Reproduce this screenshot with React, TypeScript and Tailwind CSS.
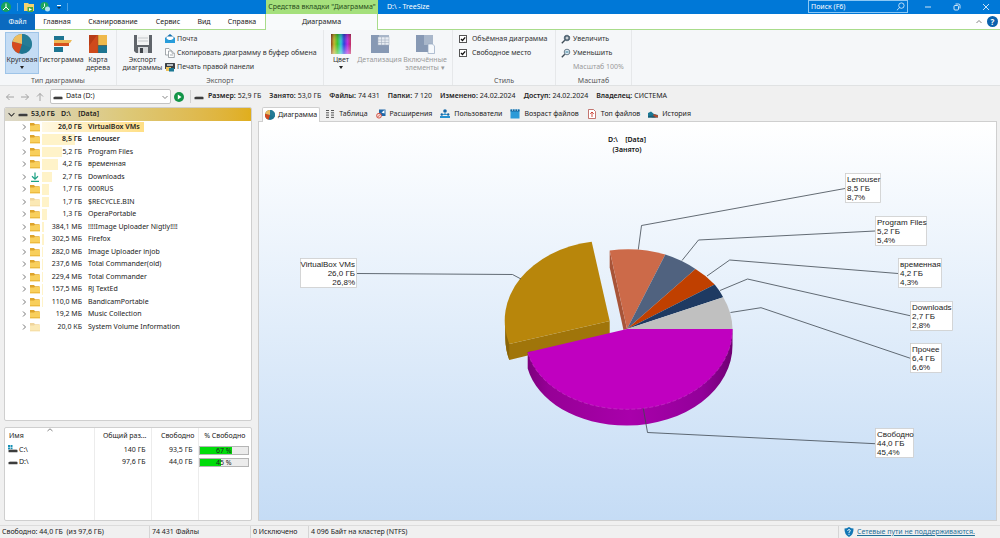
import { ReactNode, useState } from "react";

/* ---------- icons ---------- */

function PieIcon({ className = "size-5" }: { className?: string }) {
  return (
    <svg viewBox="0 0 20 20" className={className} aria-hidden="true">
      <circle cx="10" cy="10" r="10" fill="#1d7591" />
      <path d="M10 10 L10 0 A10 10 0 0 1 19 14 Z" fill="#257c96" />
      <path d="M10 10 L0.3 7.5 A10 10 0 0 0 7 19.5 Z" fill="#d64a1e" />
      <path d="M10 10 L10 0 A10 10 0 0 0 0.3 7.5 Z" fill="#eebd5f" />
    </svg>
  );
}

function HistogramIcon() {
  return (
    <svg viewBox="0 0 20 20" className="size-5" aria-hidden="true">
      <rect x="2" y="2" width="10" height="5" fill="#1d7591" />
      <rect x="2" y="13" width="9" height="5" fill="#1d7591" />
      <rect x="2" y="9" width="15" height="3" fill="#d6521e" />
      <path d="M2 6 H20 L18 9 H2 Z" fill="#edb956" />
    </svg>
  );
}

function TreemapIcon() {
  return (
    <svg viewBox="0 0 20 20" className="size-5" aria-hidden="true">
      <rect x="1" y="1" width="9" height="18" fill="#cf4a1c" />
      <path d="M1 1 H9 L1 12 Z" fill="#b73c17" />
      <rect x="10" y="1" width="9" height="11" fill="#efb94b" />
      <rect x="10" y="11" width="9" height="8" fill="#1d7591" />
      <path d="M10 1 V19 M10 11.500 H19" stroke="#8a5a2a" strokeWidth=".5" />
    </svg>
  );
}

function FloppyIcon() {
  return (
    <svg viewBox="0 0 20 20" className="size-5" aria-hidden="true">
      <path d="M1 1 H19 V19 H3 L1 17 Z" fill="#60656b" />
      <rect x="4" y="1" width="12" height="10" fill="#f2f3f4" />
      <path d="M5 4 H15 M5 7 H15" stroke="#c3c7ca" />
      <rect x="5" y="13" width="10" height="6" fill="#d6d9dc" />
      <rect x="7" y="14" width="3" height="5" fill="#3f444a" />
    </svg>
  );
}

function MailIcon() {
  return (
    <svg viewBox="0 0 10 10" className="size-[10px]" aria-hidden="true">
      <path d="M0 4 L5 0 L10 4 V9 H0 Z" fill="#1471ad" />
      <path d="M1.500 2.500 H8.500 V6 H1.500 Z" fill="#fff" />
      <path d="M0 4 L5 6.500 L10 4 V9 H0 Z" fill="#289ddb" />
    </svg>
  );
}

function CopyIcon() {
  return (
    <svg viewBox="0 0 10 10" className="size-[10px]" fill="#fff" stroke="#7f878d" strokeWidth=".7" aria-hidden="true">
      <path d="M.5 .5 H4 L6 2.500 V7 H.5 Z" />
      <path d="M3.500 3 H7 L9.300 5.200 V9.500 H3.500 Z" />
      <path d="M7 3 V5.200 H9.300 M5 7 H8" />
    </svg>
  );
}

function PrintIcon() {
  return (
    <svg viewBox="0 0 10 10" className="size-[10px]" aria-hidden="true">
      <rect x="0" y="1" width="10" height="6" rx=".5" fill="#3b4045" />
      <rect x="2" y="2" width="6" height="2" fill="#b8bec3" />
      <rect x="1" y="5" width="5" height="4" fill="#efc258" />
      <rect x="4" y="6" width="5" height="3.500" fill="#1b7894" />
    </svg>
  );
}

function ColorIcon() {
  return (
    <svg viewBox="0 0 20 20" className="size-5" aria-hidden="true">
      <defs>
        <linearGradient id="hue">
          <stop offset="0" stopColor="#8a3a1c" />
          <stop offset=".15" stopColor="#c4b52a" />
          <stop offset=".32" stopColor="#3cc32b" />
          <stop offset=".5" stopColor="#2cc6d6" />
          <stop offset=".65" stopColor="#2b3fdc" />
          <stop offset=".82" stopColor="#b92be0" />
          <stop offset="1" stopColor="#c22a58" />
        </linearGradient>
        <linearGradient id="shade" x2="0" y2="1">
          <stop offset="0" stopColor="#000" stopOpacity=".25" />
          <stop offset=".5" stopColor="#fff" stopOpacity="0" />
          <stop offset="1" stopColor="#fff" stopOpacity=".4" />
        </linearGradient>
      </defs>
      <rect width="20" height="20" fill="url(#hue)" />
      <rect width="20" height="20" fill="url(#shade)" />
    </svg>
  );
}

function DetailIcon() {
  return (
    <svg viewBox="0 0 20 20" className="size-5" aria-hidden="true">
      <rect x="1" y="1" width="18" height="18" fill="#a9b7ca" />
      <path d="M1 1 H9 V11 H19 V19 H1 Z" fill="#8799b4" />
      <rect x="8" y="3" width="11" height="8" fill="#e8edf3" stroke="#a2aebf" strokeWidth=".5" />
      <path d="M8 6 H19 M8 8.500 H19 M11.500 3 V11 M15 3 V11" stroke="#a2aebf" strokeWidth=".6" />
    </svg>
  );
}

function IncludedIcon() {
  return (
    <svg viewBox="0 0 20 20" className="size-5" aria-hidden="true">
      <rect x="1" y="1" width="17" height="17" fill="#a9b7ca" />
      <path d="M1 1 H9 V11 H18 V18 H1 Z" fill="#8799b4" />
      <path d="M13 10 H17.500 L19.500 12 V19.500 H13 Z" fill="#f6f9fc" stroke="#93a6c0" strokeWidth=".7" />
    </svg>
  );
}

function ZoomIcon({ plus }: { plus?: boolean }) {
  return (
    <svg viewBox="0 0 10 10" className="size-[10px]" fill="none" aria-hidden="true">
      <path d="M.8 9.200 L3.800 6.200" stroke="#3c4a55" strokeWidth="1.300" />
      <circle cx="6" cy="4" r="2.800" fill={plus ? "#4c6170" : "#dce9f2"} stroke="#4c6170" strokeWidth=".8" />
      <path d="M4.500 4 H7.500" stroke={plus ? "#fff" : "#1d7591"} strokeWidth=".9" />
      {plus && <path d="M6 2.500 V5.500 M8.500 0 V2 M7.500 1 H9.500" stroke="#fff" strokeWidth=".9" />}
    </svg>
  );
}

function FolderIcon({ faded }: { faded?: boolean }) {
  return (
    <svg viewBox="0 0 10 10" className={faded ? "size-[10px] shrink-0 opacity-45" : "size-[10px] shrink-0"} aria-hidden="true">
      <path d="M0 1 H4 L5 2.200 H9.500 V5 H0 Z" fill="#dda32b" />
      <path d="M0 3.500 H4 L5 2.800 H10 V9.200 H0 Z" fill="#f8cf5c" />
      <path d="M0 8 H10 V9.200 H0 Z" fill="#edba3f" />
    </svg>
  );
}

function DownloadIcon() {
  return (
    <svg viewBox="0 0 10 10" className="size-[10px] shrink-0" fill="none" stroke="#1ba184" aria-hidden="true">
      <path d="M5 .5 V7 M2 4.300 L5 7.200 L8 4.300 M1 9.300 H9" strokeWidth="1.200" />
    </svg>
  );
}

function DriveIcon({ system }: { system?: boolean }) {
  return (
    <svg viewBox="0 0 10 10" className="size-[10px] shrink-0" aria-hidden="true">
      {system && <path d="M0 0 H2 V2 H0 Z M2.500 0 H4.500 V2 H2.500 Z M0 2.500 H2 V4.500 H0 Z M2.500 2.500 H4.500 V4.500 H2.500 Z" fill="#1790b5" />}
      <path d="M1 5 L2 4.300 H8.500 L9.500 5 Z" fill="#a5a5a5" />
      <rect x=".5" y="5" width="9" height="2.200" rx=".5" fill="#3d3d3d" />
    </svg>
  );
}

function Chevron({ className = "size-[6px]", d = "M2 0.5 L4.500 3 L2 5.500" }: { className?: string; d?: string }) {
  return (
    <svg viewBox="0 0 6 6" className={className} fill="none" stroke="currentColor" strokeWidth=".9" aria-hidden="true">
      <path d={d} />
    </svg>
  );
}

function Arrow({ d }: { d: string }) {
  return (
    <svg viewBox="0 0 10 10" className="size-[10px]" fill="none" stroke="#9a9a9a" strokeWidth=".9" aria-hidden="true">
      <path d={d} />
    </svg>
  );
}

const tabIcons: Record<string, ReactNode> = {
  table: (
    <svg viewBox="0 0 10 10" className="size-[10px]" stroke="#555" strokeWidth="1" aria-hidden="true">
      <path d="M1 1.500 H4 M6 1.500 H9 M1 3.800 H4 M6 3.800 H9 M1 6.100 H4 M6 6.100 H9 M1 8.400 H4 M6 8.400 H9" />
    </svg>
  ),
  ext: (
    <svg viewBox="0 0 10 10" className="size-[10px]" aria-hidden="true">
      <path d="M3 .5 H9.500 V7 H3 Z" fill="#1f66a8" />
      <path d="M5.500 3.500 L8.500 1 V4.500 Z" fill="#fff" />
      <circle cx="3" cy="6.700" r="2.400" fill="#f7dcd8" stroke="#cf4a3c" strokeWidth=".9" />
      <path d="M1.500 8.200 L4.500 5.200" stroke="#cf4a3c" strokeWidth=".8" />
    </svg>
  ),
  users: (
    <svg viewBox="0 0 10 10" className="size-[10px]" aria-hidden="true">
      <circle cx="5" cy="2" r="1.800" fill="#1768a6" />
      <path d="M2.500 6 Q5 2.500 7.500 6 Z" fill="#2690cf" />
      <circle cx="1.800" cy="5.500" r="1.200" fill="#1768a6" />
      <circle cx="8.200" cy="5.500" r="1.200" fill="#1768a6" />
      <path d="M0 7 H10 V9 H0 Z" fill="#2690cf" />
    </svg>
  ),
  age: (
    <svg viewBox="0 0 10 10" className="size-[10px]" aria-hidden="true">
      <rect x=".5" y=".5" width="9" height="9" fill="#2b9ad8" />
      <rect x=".5" y=".5" width="9" height="2" fill="#15649b" />
      <path d="M2.500 0 V2 M5 0 V2 M7.500 0 V2" stroke="#d9eefa" strokeWidth=".6" />
    </svg>
  ),
  top: (
    <svg viewBox="0 0 10 10" className="size-[10px]" fill="none" aria-hidden="true">
      <path d="M1.500 .5 H6.500 L8.500 2.500 V9.500 H1.500 Z" fill="#fff" stroke="#b5544c" strokeWidth=".8" />
      <path d="M5 8 V3 M3.200 4.800 L5 3 L6.800 4.800" stroke="#cb3a2c" strokeWidth=".9" />
    </svg>
  ),
  history: (
    <svg viewBox="0 0 10 10" className="size-[10px]" aria-hidden="true">
      <path d="M0 8.500 V4 L3 2.500 L6 5 L10 6 V8.500 Z" fill="#1c7894" />
      <path d="M3.500 8.500 L6 5 L10 6.500 V8.500 Z" fill="#b14b2e" />
      <path d="M0 7 L5 6.500 L8 8.500 H0 Z" fill="#175f78" />
    </svg>
  ),
};

/* ---------- title bar and ribbon ---------- */

function TitleBar() {
  return (
    <header className="flex h-[14px] shrink-0 items-stretch bg-[#0078d7] text-white">
      <div className="flex w-[266px] items-center gap-[6px] pl-px">
        <svg viewBox="0 0 10 10" className="size-[10px]" aria-hidden="true">
          <circle cx="5" cy="5" r="5" fill="#17a35b" />
          <path d="M5 1.500 V5 M5 5 L2 8 M5 5 L8 8" stroke="#fff" strokeWidth="1" />
        </svg>
        <span className="h-2 w-px bg-[#4ba0e3]" />
        <button aria-label="Открыть">
          <svg viewBox="0 0 10 10" className="size-[10px]" aria-hidden="true">
            <path d="M0 1 H4 L5 2 H10 V9 H0 Z" fill="#f5d36d" />
            <path d="M3.500 5 H9 V10 H3.500 Z" fill="#4aa83f" />
            <path d="M5 6 L8 7.500 L5 9 Z" fill="#fff" />
          </svg>
        </button>
        <button aria-label="Обновить">
          <svg viewBox="0 0 10 10" className="size-[10px]" aria-hidden="true">
            <circle cx="4.500" cy="4" r="4" fill="#1ca65d" />
            <path d="M4.500 1.500 V4.500 L2.500 6.500" stroke="#fff" strokeWidth=".9" fill="none" />
            <circle cx="7.500" cy="7" r="2.500" fill="#aee1f2" />
          </svg>
        </button>
        <button aria-label="Настройка панели">
          <svg viewBox="0 0 6 6" className="size-[6px]" aria-hidden="true">
            <path d="M1 1.500 H5" stroke="#fff" />
            <path d="M1 3 H5 L3 5 Z" fill="#102a40" />
          </svg>
        </button>
        <span className="-ml-px h-2 w-px bg-[#4ba0e3]" />
      </div>
      <div className="flex w-[112px] items-center justify-center bg-[#a5e07c] text-[7px] whitespace-nowrap text-[#254a1a]">
        Средства вкладки "Диаграмма"
      </div>
      <h1 className="flex flex-1 items-center pl-[9px] text-[7px]">D:\ - TreeSize</h1>
      <label className="mb-px flex w-[100px] items-center border border-[#8cc8f5] pr-[2px]">
        <input
          aria-label="Поиск"
          placeholder="Поиск (F6)"
          className="min-w-0 flex-1 bg-transparent pl-[2px] text-[7px] leading-[9px] outline-none placeholder:text-white"
        />
        <svg viewBox="0 0 10 10" className="size-[9px]" fill="none" stroke="#fff" strokeWidth=".8" aria-hidden="true">
          <circle cx="6" cy="4" r="3" />
          <path d="M4 6.200 L1 9.200" />
        </svg>
      </label>
      <div className="flex w-[92px] items-center justify-around pl-[5px]">
        <button aria-label="Свернуть">
          <svg viewBox="0 0 8 8" className="size-2" stroke="#fff" strokeWidth=".8">
            <path d="M1 4 H7" />
          </svg>
        </button>
        <button aria-label="Восстановить">
          <svg viewBox="0 0 8 8" className="size-2" fill="none" stroke="#fff" strokeWidth=".8">
            <rect x="1" y="2.500" width="4.500" height="4.500" rx="1" />
            <path d="M2.500 1 H5.500 Q7 1 7 2.500 V5.500" />
          </svg>
        </button>
        <button aria-label="Закрыть">
          <svg viewBox="0 0 8 8" className="size-2" stroke="#fff" strokeWidth=".8">
            <path d="M1 1 L7 7 M7 1 L1 7" />
          </svg>
        </button>
      </div>
    </header>
  );
}

function RibbonTabs() {
  const tab = "flex items-center justify-center pt-px text-[7px]";
  return (
    <nav className="flex h-4 shrink-0 bg-white">
      <button className="w-[35px] bg-[#0b6abf] text-[7px] text-white">Файл</button>
      <div className="flex w-[231px] border-r border-b border-[#a9dc8b]">
        <button className={`${tab} w-[44px]`}>Главная</button>
        <button className={`${tab} w-[68px]`}>Сканирование</button>
        <button className={`${tab} w-[42px]`}>Сервис</button>
        <button className={`${tab} w-[30px]`}>Вид</button>
        <button className={`${tab} w-[46px]`}>Справка</button>
      </div>
      <button className={`${tab} w-[112px] border-r border-[#a9dc8b] bg-[#f8fafb]`}>Диаграмма</button>
      <div className="flex flex-1 items-center justify-end gap-[5px] border-b border-[#a9dc8b] pr-[2px]">
        <button aria-label="Свернуть ленту" className="text-[#777]">
          <Chevron d="M.5 4 L3 1.500 L5.500 4" />
        </button>
        <button aria-label="Помощь" className="grid size-[11px] place-items-center rounded-full bg-[#0b62ad] text-[8px] leading-none font-bold text-white">
          ?
        </button>
      </div>
    </nav>
  );
}

function Group({ title, className, children }: { title: string; className: string; children: ReactNode }) {
  return (
    <section className={`flex flex-col justify-between border-r border-[#e6e8ea] pt-[2px] ${className}`}>
      <div className="flex">{children}</div>
      <h2 className="text-center text-[7px] leading-[9px] text-[#555]">{title}</h2>
    </section>
  );
}

function BigButton({ icon, lines, arrow, className, disabled }: { icon: ReactNode; lines: string[]; arrow?: boolean; className: string; disabled?: boolean }) {
  return (
    <button
      disabled={disabled}
      className={`flex h-[42px] flex-col items-center border pt-px text-[7px] leading-[8px] whitespace-nowrap disabled:text-[#9a9a9a] ${className}`}
    >
      <span className="mb-[2px]">{icon}</span>
      {lines.map((l) => (
        <span key={l}>{l}</span>
      ))}
      {arrow && (
        <svg viewBox="0 0 4 3" className="mt-[2px] h-[3px] w-1" aria-hidden="true">
          <path d="M0 0 H4 L2 3 Z" fill="#222" />
        </svg>
      )}
    </button>
  );
}

function SmallButton({ icon, label }: { icon: ReactNode; label: string }) {
  return (
    <button className="flex h-[14px] items-center gap-[2px] whitespace-nowrap">
      {icon}
      {label}
    </button>
  );
}

function Check({ label }: { label: string }) {
  return (
    <label className="flex h-[14px] items-center gap-[5px] whitespace-nowrap">
      <span className="grid size-2">
        <input type="checkbox" defaultChecked className="peer col-start-1 row-start-1 size-2 appearance-none border border-[#555] bg-white" />
        <svg viewBox="0 0 8 8" className="pointer-events-none col-start-1 row-start-1 hidden size-2 peer-checked:block" fill="none" stroke="#111" strokeWidth="1.300" aria-hidden="true">
          <path d="M2 4 L3.500 5.500 L6.200 2.300" />
        </svg>
      </span>
      {label}
    </label>
  );
}

function Ribbon() {
  return (
    <div className="flex h-[56px] shrink-0 border-b border-[#e0e2e3] bg-[#f5f7f9] text-[7px] text-[#333]">
      <Group title="Тип диаграммы" className="w-[117px]">
        <BigButton icon={<PieIcon />} lines={["Круговая"]} arrow className="ml-[5px] w-[34px] border-[#9ec4e8] bg-[#c4dcf4]" />
        <BigButton icon={<HistogramIcon />} lines={["Гистограмма"]} className="w-[45px] border-transparent" />
        <BigButton icon={<TreemapIcon />} lines={["Карта", "дерева"]} className="w-[28px] border-transparent" />
      </Group>
      <Group title="Экспорт" className="w-[207px]">
        <BigButton icon={<FloppyIcon />} lines={["Экспорт", "диаграммы"]} className="ml-[5px] w-[41px] border-transparent" />
        <div className="ml-[2px] flex flex-col">
          <SmallButton icon={<MailIcon />} label="Почта" />
          <SmallButton icon={<CopyIcon />} label="Скопировать диаграмму в буфер обмена" />
          <SmallButton icon={<PrintIcon />} label="Печать правой панели" />
        </div>
      </Group>
      <Group title="" className="w-[129px]">
        <BigButton icon={<ColorIcon />} lines={["Цвет"]} arrow className="w-[34px] border-transparent" />
        <BigButton icon={<DetailIcon />} lines={["Детализация"]} className="w-[43px] border-transparent" disabled />
        <BigButton icon={<IncludedIcon />} lines={["Включённые", "элементы ▾"]} className="w-[48px] border-transparent" disabled />
      </Group>
      <Group title="Стиль" className="w-[103px]">
        <div className="flex flex-col pl-[6px]">
          <Check label="Объёмная диаграмма" />
          <Check label="Свободное место" />
        </div>
      </Group>
      <Group title="Масштаб" className="w-[76px]">
        <div className="flex flex-col pl-[5px]">
          <SmallButton icon={<ZoomIcon plus />} label="Увеличить" />
          <SmallButton icon={<ZoomIcon />} label="Уменьшить" />
          <button disabled className="h-[14px] pl-3 text-left whitespace-nowrap text-[#9a9a9a]">
            Масштаб 100%
          </button>
        </div>
      </Group>
    </div>
  );
}

const facts = [
  ["Размер:", "52,9 ГБ"],
  ["Занято:", "53,0 ГБ"],
  ["Файлы:", "74 431"],
  ["Папки:", "7 120"],
  ["Изменено:", "24.02.2024"],
  ["Доступ:", "24.02.2024"],
  ["Владелец:", "СИСТЕМА"],
];

function PathBar() {
  return (
    <div className="flex h-[21px] shrink-0 items-center text-[7px]">
      <div className="flex w-[50px] items-center gap-[5px] pl-[5px]">
        <button aria-label="Назад">
          <Arrow d="M9 5 H1.500 M4.500 2 L1.500 5 L4.500 8" />
        </button>
        <button aria-label="Вперёд">
          <Arrow d="M1 5 H8.500 M5.500 2 L8.500 5 L5.500 8" />
        </button>
        <button aria-label="Вверх">
          <Arrow d="M5 9 V1.500 M2 4.500 L5 1.500 L8 4.500" />
        </button>
      </div>
      <div className="flex h-[15px] w-[121px] items-center rounded-[2px] border border-[#c3c3c3] bg-white pr-[2px] pl-[2px]">
        <DriveIcon />
        <select aria-label="Диск" className="min-w-0 flex-1 appearance-none bg-transparent pl-[3px] text-[7px] outline-none">
          <option>Data (D:)</option>
        </select>
        <Chevron className="pointer-events-none size-[6px] text-[#777]" d="M.5 2 L3 4.500 L5.500 2" />
      </div>
      <button aria-label="Запустить" className="ml-[3px]">
        <svg viewBox="0 0 10 10" className="size-[10px]">
          <circle cx="5" cy="5" r="5" fill="#129447" />
          <path d="M3.800 2.500 L7.500 5 L3.800 7.500 Z" fill="#fff" />
        </svg>
      </button>
      <span className="ml-[6px] h-[13px] w-px bg-[#d2d2d2]" />
      <dl className="flex items-center gap-2 pl-[3px] whitespace-nowrap">
        {facts.map(([k, v], i) => (
          <div key={k} className="flex items-center gap-[2px]">
            {i === 0 && <DriveIcon />}
            <dt className={i === 0 ? "ml-[2px] font-semibold" : "font-semibold"}>{k}</dt>
            <dd>{v}</dd>
          </div>
        ))}
      </dl>
    </div>
  );
}

/* ---------- left side ---------- */

type Item = { size: string; name: string; bar: number; kind?: "down" | "faded" };

const items: Item[] = [
  { size: "26,0 ГБ", name: "VirtualBox VMs", bar: 102 },
  { size: "8,5 ГБ", name: "Lenouser", bar: 33 },
  { size: "5,2 ГБ", name: "Program Files", bar: 20 },
  { size: "4,2 ГБ", name: "временная", bar: 16 },
  { size: "2,7 ГБ", name: "Downloads", bar: 10, kind: "down" },
  { size: "1,7 ГБ", name: "000RUS", bar: 7 },
  { size: "1,7 ГБ", name: "$RECYCLE.BIN", bar: 7, kind: "faded" },
  { size: "1,3 ГБ", name: "OperaPortable", bar: 5 },
  { size: "384,1 МБ", name: "!!!!Image Uploader Nigtly!!!!", bar: 2 },
  { size: "302,5 МБ", name: "Firefox", bar: 2 },
  { size: "282,0 МБ", name: "Image Uploader injob", bar: 1 },
  { size: "237,6 МБ", name: "Total Commander(old)", bar: 1 },
  { size: "229,4 МБ", name: "Total Commander", bar: 1 },
  { size: "157,5 МБ", name: "RJ TextEd", bar: 1 },
  { size: "110,0 МБ", name: "BandicamPortable", bar: 1 },
  { size: "19,2 МБ", name: "Music Collection", bar: 0 },
  { size: "20,0 КБ", name: "System Volume Information", bar: 0, kind: "faded" },
];

function FolderTree() {
  const [open, setOpen] = useState(true);
  return (
    <section className="flex-1 overflow-hidden rounded-[2px] border border-[#cfcfcf] bg-white text-[7px]">
      <ul className="grid h-[225px] auto-rows-fr">
        <li className="flex items-center bg-linear-to-r from-[#dcd8c8] via-[#ddc877] to-[#e0ae1c] pl-[3px] font-semibold">
          <button aria-label="Развернуть" onClick={() => setOpen(!open)}>
            <Chevron className="size-[7px] text-[#333]" d="M.5 1.800 L3 4.300 L5.500 1.800" />
          </button>
          <span className="ml-[3px]">
            <DriveIcon />
          </span>
          <span className="ml-[3px]">53,0 ГБ</span>
          <span className="ml-[6px] whitespace-pre">{"D:\\    [Data]"}</span>
        </li>
        {open &&
          items.map((it, i) => (
            <li key={it.name} className="flex items-center pl-[15px]">
              <button aria-label={it.name} className="w-[10px] pl-px text-[#666]">
                <Chevron />
              </button>
              {it.kind === "down" ? <DownloadIcon /> : <FolderIcon faded={it.kind === "faded"} />}
              <div className={`relative ml-[2px] flex h-full flex-1 items-center whitespace-nowrap ${i < 2 ? "font-semibold" : ""}`}>
                <span
                  className={`absolute inset-y-px left-0 ${i === 0 ? "bg-linear-to-r from-[#fff8e2] to-[#ffdf85]" : "bg-[#fff3c9]"}`}
                  style={{ width: it.bar }}
                />
                <span className="relative w-[40px] text-right">{it.size}</span>
                <span className="relative pl-[6px]">{it.name}</span>
              </div>
            </li>
          ))}
      </ul>
    </section>
  );
}

const drives = [
  { name: "C:\\", total: "140 ГБ", free: "93,5 ГБ", pct: 67 },
  { name: "D:\\", total: "97,6 ГБ", free: "44,0 ГБ", pct: 45 },
];

function DriveList() {
  return (
    <section className="relative flex h-[94px] shrink-0 overflow-hidden rounded-[2px] border border-[#cfcfcf] bg-white">
      <div className="absolute top-0 left-[42px] text-[#777]">
        <Chevron d="M.5 3 L3 .8 L5.500 3" className="size-[6px]" />
      </div>
      <table className="h-full w-full table-fixed border-collapse text-[7px]">
        <colgroup>
          <col />
          <col className="w-[57px]" />
          <col className="w-[47px]" />
          <col className="w-[53px]" />
        </colgroup>
        <thead>
          <tr className="h-4 whitespace-nowrap">
            <th className="pl-1 text-left font-normal">Имя</th>
            <th className="border-l border-[#ececec] pr-1 text-right font-normal">Общий раз...</th>
            <th className="border-l border-[#ececec] pr-[3px] text-right font-normal">Свободно</th>
            <th className="border-l border-[#ececec] text-center font-normal">% Свободно</th>
          </tr>
        </thead>
        <tbody>
          {drives.map((d, i) => (
            <tr key={d.name} className="h-3">
              <td className="pl-[3px]">
                <span className="flex items-center gap-px">
                  <DriveIcon system={i === 0} />
                  {d.name}
                </span>
              </td>
              <td className="border-l border-[#ececec] pr-[5px] text-right">{d.total}</td>
              <td className="border-l border-[#ececec] pr-[5px] text-right">{d.free}</td>
              <td className="border-l border-[#ececec] pr-[2px]">
                <div className="relative h-[9px] border border-[#b5b5b5] bg-[#ececec]">
                  <div className="h-full bg-[#00dc0a]" style={{ width: `${d.pct}%` }} />
                  <span className="absolute inset-0 text-center leading-[7px]">{d.pct} %</span>
                </div>
              </td>
            </tr>
          ))}
          <tr>
            <td />
            <td className="border-l border-[#ececec]" />
            <td className="border-l border-[#ececec]" />
            <td className="border-l border-[#ececec]" />
          </tr>
        </tbody>
      </table>
    </section>
  );
}

/* ---------- chart ---------- */

const callouts = [
  { name: "VirtualBox VMs", size: "26,0 ГБ", pct: "26,8%", x: 300, y: 258, w: 57, line: "357,273.500 512.500,274.500 521,279", end: true },
  { name: "Lenouser", size: "8,5 ГБ", pct: "8,7%", x: 845, y: 173, w: 36, line: "638.300,249.500 641.500,225.500 845,188.500" },
  { name: "Program Files", size: "5,2 ГБ", pct: "5,4%", x: 875, y: 216, w: 52, line: "682,260.500 698.500,240 875,231" },
  { name: "временная", size: "4,2 ГБ", pct: "4,3%", x: 898, y: 258, w: 44, line: "707,276 729.700,260 898,273.500" },
  { name: "Downloads", size: "2,7 ГБ", pct: "2,8%", x: 910, y: 301, w: 43, line: "720,290.500 747.500,279 910,315.700" },
  { name: "Прочее", size: "6,4 ГБ", pct: "6,6%", x: 910, y: 343, w: 32, line: "730.500,312.500 761,307.700 911,358.500" },
  { name: "Свободно", size: "44,0 ГБ", pct: "45,4%", x: 875, y: 428, w: 39, line: "643.300,408.500 647.500,432.500 875,443.700" },
];

function PieChart() {
  return (
    <svg viewBox="259 122 737 398" className="h-full w-full" role="img" aria-label="Диаграмма занятого места">
      <defs>
        <linearGradient id="rim">
          <stop offset="0" stopColor="#7c007c" />
          <stop offset=".1" stopColor="#960096" />
          <stop offset=".5" stopColor="#a900ab" />
          <stop offset=".85" stopColor="#93009a" />
          <stop offset="1" stopColor="#6f0072" />
        </linearGradient>
      </defs>
      <g fontFamily="'Noto Sans', sans-serif" fontSize="7" fontWeight="600" textAnchor="middle" fill="#111">
        <text x="627" y="142" style={{ whiteSpace: "pre" }}>{"D:\\    [Data]"}</text>
        <text x="627" y="152">(Занято)</text>
      </g>

      <path d="M505.300 322 V338 Q505.500 350 509.300 360 L609.700 335.500 V321 L509.300 344 Z" fill="#a0750a" />
      <path d="M505.300 322 V338 Q505.500 350 509.300 360 V344 Z" fill="#8b6508" />
      <path d="M609.700 321 L591.700 241.700 A104.500 80 0 0 0 509.300 344 Z" fill="#b8860b" />

      <path d="M609.700 250.500 V267.500 L623.500 330 L627 329 Z" fill="#a85438" />
      <path d="M627 329 L609.700 250.500 A105.500 80 0 0 1 665.300 254.500 Z" fill="#cc6a49" />
      <path d="M627 329 L665.300 254.500 A105.500 80 0 0 1 695.500 269 Z" fill="#50627f" />
      <path d="M627 329 L695.500 269 A105.500 80 0 0 1 714.700 284.500 Z" fill="#c04000" />
      <path d="M627 329 L714.700 284.500 A105.500 80 0 0 1 723.200 297.200 Z" fill="#1e3a62" />
      <path d="M627 329 L723.200 297.200 A105.500 80 0 0 1 732.500 329 Z" fill="#c0c0c0" />

      <path d="M527.700 352 V368.500 C537 401 577 425.500 627 425.500 A105.500 80 0 0 0 732.500 345 V329 Z" fill="url(#rim)" />
      <path d="M627 329 H732.500 A105.500 80.300 0 0 1 627 409.300 C577 409.300 537 385 527.700 352.300 Z" fill="#c000c0" />
      <path d="M732.500 329 A105.500 80.300 0 0 1 627 409.300 C577 409.300 537 385 527.700 352.300" fill="none" stroke="#d25ad2" strokeWidth=".4" strokeDasharray="4 2" />

      {callouts.map((c) => (
        <g key={c.name}>
          <polyline points={c.line} fill="none" stroke="#3f4750" strokeWidth=".8" />
          <rect x={c.x + 0.5} y={c.y + 0.5} width={c.w - 1} height="29" fill="#fff" stroke="#cdcdcd" strokeWidth=".8" />
          <g fontFamily="'Liberation Sans', sans-serif" fontSize="8" fill="#222" textAnchor={c.end ? "end" : "start"}>
            <text x={c.end ? c.x + c.w - 2 : c.x + 2} y={c.y + 9}>{c.name}</text>
            <text x={c.end ? c.x + c.w - 2 : c.x + 2} y={c.y + 18}>{c.size}</text>
            <text x={c.end ? c.x + c.w - 2 : c.x + 2} y={c.y + 27}>{c.pct}</text>
          </g>
        </g>
      ))}
    </svg>
  );
}

const viewTabs = [
  { label: "Таблица", icon: "table" },
  { label: "Расширения", icon: "ext" },
  { label: "Пользователи", icon: "users" },
  { label: "Возраст файлов", icon: "age" },
  { label: "Топ файлов", icon: "top" },
  { label: "История", icon: "history" },
];

function ChartPane() {
  return (
    <main className="flex min-w-0 flex-1 flex-col">
      <div className="flex h-[14px] shrink-0 items-center pl-1 text-[7px] whitespace-nowrap" role="tablist">
        <button role="tab" aria-selected="true" className="z-10 flex h-[15px] items-center gap-[3px] self-start rounded-t-[2px] border border-b-0 border-[#cfcfcf] bg-white px-[2px]">
          <PieIcon className="size-[10px]" />
          Диаграмма
        </button>
        <div className="flex gap-2 pl-[5px]">
          {viewTabs.map((t) => (
            <button key={t.label} role="tab" aria-selected="false" className="flex items-center gap-1">
              {tabIcons[t.icon]}
              {t.label}
            </button>
          ))}
        </div>
      </div>
      <div className="min-h-0 flex-1 border border-[#cfcfcf] bg-linear-to-b from-white to-[#c5dcf5]">
        <PieChart />
      </div>
    </main>
  );
}

function StatusBar() {
  const cell = "flex items-center border-r border-[#d5d5d5] pl-[2px]";
  return (
    <footer className="flex h-[13px] shrink-0 border-t border-[#dcdcdc] text-[7px] whitespace-pre">
      <span className={`${cell} w-[150px]`}>{"Свободно: 44,0 ГБ  (из 97,6 ГБ)"}</span>
      <span className={`${cell} w-[101px]`}>74 431 Файлы</span>
      <span className={`${cell} w-[58px]`}>0 Исключено</span>
      <span className={`${cell} flex-1`}>4 096 Байт на кластер (NTFS)</span>
      <span className="flex w-[161px] items-center gap-[3px] pl-[5px]">
        <svg viewBox="0 0 10 10" className="size-[10px]" aria-hidden="true">
          <path d="M5 0 Q7.500 1.500 9.500 1.500 Q9.800 7.500 5 10 Q.2 7.500 .5 1.500 Q2.500 1.500 5 0 Z" fill="#1277b5" />
          <path d="M3.600 3.800 Q3.800 2.600 5 2.600 Q6.400 2.600 6.300 3.800 Q6.200 4.600 5 5.200 V6.200 M5 7 V7.900" fill="none" stroke="#fff" strokeWidth=".9" />
        </svg>
        <a href="#network" className="text-[#1f6f98] underline">
          Сетевые пути не поддерживаются.
        </a>
      </span>
    </footer>
  );
}

export default function App() {
  return (
    <div className="flex h-screen w-full flex-col overflow-hidden bg-[#f0f0f0] font-['Noto_Sans','Open_Sans',sans-serif] text-[#222]">
      <TitleBar />
      <RibbonTabs />
      <Ribbon />
      <PathBar />
      <div className="flex min-h-0 flex-1 gap-[6px] pr-[3px] pb-1 pl-1">
        <aside className="flex w-[248px] shrink-0 flex-col gap-[6px]">
          <FolderTree />
          <DriveList />
        </aside>
        <ChartPane />
      </div>
      <StatusBar />
    </div>
  );
}
